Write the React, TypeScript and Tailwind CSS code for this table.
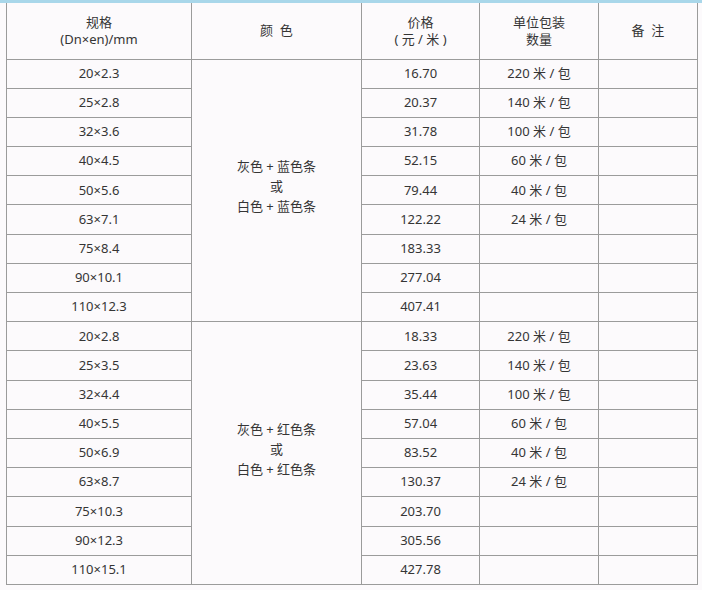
import React from "react"

type Row = { spec: string; price: string; pack?: string }

const blueRows: Row[] = [
  { spec: "20×2.3", price: "16.70", pack: "220" },
  { spec: "25×2.8", price: "20.37", pack: "140" },
  { spec: "32×3.6", price: "31.78", pack: "100" },
  { spec: "40×4.5", price: "52.15", pack: "60" },
  { spec: "50×5.6", price: "79.44", pack: "40" },
  { spec: "63×7.1", price: "122.22", pack: "24" },
  { spec: "75×8.4", price: "183.33" },
  { spec: "90×10.1", price: "277.04" },
  { spec: "110×12.3", price: "407.41" },
]

const redRows: Row[] = [
  { spec: "20×2.8", price: "18.33", pack: "220" },
  { spec: "25×3.5", price: "23.63", pack: "140" },
  { spec: "32×4.4", price: "35.44", pack: "100" },
  { spec: "40×5.5", price: "57.04", pack: "60" },
  { spec: "50×6.9", price: "83.52", pack: "40" },
  { spec: "63×8.7", price: "130.37", pack: "24" },
  { spec: "75×10.3", price: "203.70" },
  { spec: "90×12.3", price: "305.56" },
  { spec: "110×15.1", price: "427.78" },
]

const cell = "border border-[#9b9b9b] text-center align-middle p-0"

function Group({ rows, stripe }: { rows: Row[]; stripe: string }) {
  return (
    <>
      {rows.map((r, i) => (
        <tr key={r.spec} className="h-[29.2px]">
          <td className={cell}>{r.spec}</td>
          {i === 0 && (
            <td rowSpan={rows.length} className={cell}>
              <div className="flex flex-col items-center gap-[2px] pb-[8px] leading-[18px]">
                <span>灰色 + {stripe}</span>
                <span>或</span>
                <span>白色 + {stripe}</span>
              </div>
            </td>
          )}
          <td className={cell}>{r.price}</td>
          <td className={cell}>{r.pack ? `${r.pack} 米 / 包` : ""}</td>
          <td className={cell}></td>
        </tr>
      ))}
    </>
  )
}

export default function App() {
  return (
    <div
      className="w-[702px] h-[590px] bg-[#fcfafc] text-[#353535] text-[13px] overflow-hidden"
      style={{ fontFamily: '"Noto Sans", "Noto Sans CJK SC", sans-serif' }}
    >
      <div className="h-[3px] bg-[#a9d7ea]" />
      <div className="pl-[6px]">
        <table className="border-collapse table-fixed w-[691px]">
          <colgroup>
            <col className="w-[185px]" />
            <col className="w-[170px]" />
            <col className="w-[118px]" />
            <col className="w-[119px]" />
            <col className="w-[99px]" />
          </colgroup>
          <thead>
            <tr className="h-[56px]">
              <th className={`${cell} font-normal leading-[17px] border-t-0`}>
                <div className="flex flex-col items-center">
                  <span>规格</span>
                  <span>(Dn×en)/mm</span>
                </div>
              </th>
              <th className={`${cell} font-normal border-t-0`}>颜&nbsp;&nbsp;色</th>
              <th className={`${cell} font-normal leading-[17px] border-t-0`}>
                <div className="flex flex-col items-center">
                  <span>价格</span>
                  <span>( 元 / 米 )</span>
                </div>
              </th>
              <th className={`${cell} font-normal leading-[17px] border-t-0`}>
                <div className="flex flex-col items-center">
                  <span>单位包装</span>
                  <span>数量</span>
                </div>
              </th>
              <th className={`${cell} font-normal border-t-0`}>备&nbsp;&nbsp;注</th>
            </tr>
          </thead>
          <tbody>
            <Group rows={blueRows} stripe="蓝色条" />
            <Group rows={redRows} stripe="红色条" />
          </tbody>
        </table>
      </div>
    </div>
  )
}
